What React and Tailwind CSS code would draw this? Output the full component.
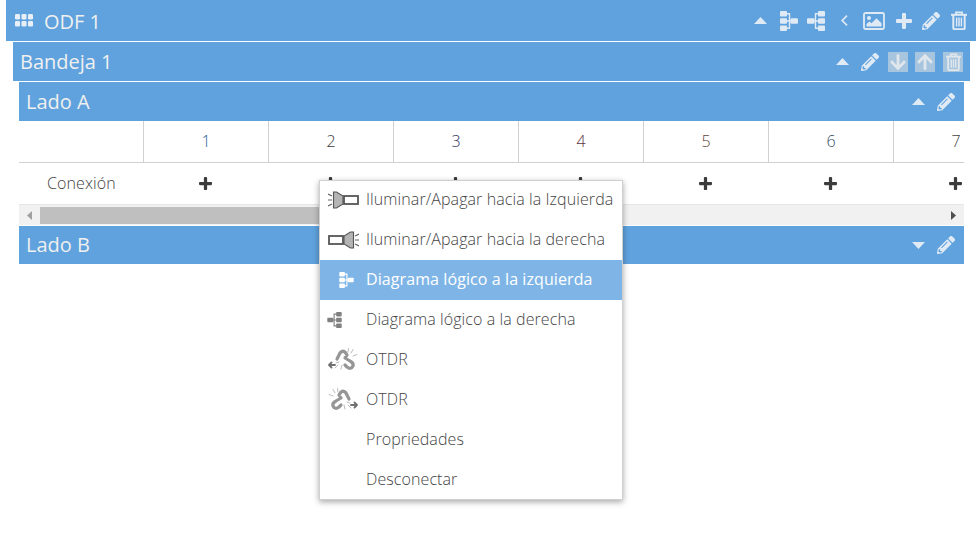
import React from 'react';
import { FaPencilAlt, FaArrowDown, FaArrowUp } from 'react-icons/fa';

const ports = [1, 2, 3, 4, 5, 6, 7];
const numColors = ['#1f5f96', '#3a3a3a', '#34345e', '#5e3444', '#5e4434', '#345064', '#444'];

function GridIcon() {
  return (
    <svg width="18" height="13" viewBox="0 0 18 13" fill="#e8eff6" className="mr-[11px]">
      {[0, 6.5, 13].map((x) =>
        [0, 7].map((y) => <rect key={`${x}-${y}`} x={x} y={y} width="5" height="5.5" rx="1.2" />)
      )}
    </svg>
  );
}

// three boxes on the left, one on the right
function TreeLeft({ w = 18, h = 20, className }) {
  return (
    <svg width={w} height={h} viewBox="0 0 18 20" fill="currentColor" className={className}>
      <rect x="0" y="0" width="7" height="5.5" rx="1" />
      <rect x="0" y="7.2" width="7" height="5.6" rx="1" />
      <rect x="0" y="14.5" width="7" height="5.5" rx="1" />
      <rect x="10.5" y="7.2" width="7.5" height="5.6" rx="1" />
      <path d="M7 2.7h2.5v14.6H7M7 10h4" fill="none" stroke="currentColor" strokeWidth="1.4" />
    </svg>
  );
}

function TreeRight({ w = 18, h = 20, className }) {
  return <TreeLeft w={w} h={h} className={`-scale-x-100 ${className}`} />;
}

function Caret({ down }) {
  return (
    <svg width="13" height="7" viewBox="0 0 13 7" fill="currentColor">
      <path d={down ? 'M0 0h13L6.5 7z' : 'M6.5 0L13 7H0z'} />
    </svg>
  );
}

function ScrollArrow({ right, color }) {
  return (
    <svg width="5" height="9" viewBox="0 0 5 9" fill={color}>
      <path d={right ? 'M0 0l5 4.5L0 9z' : 'M5 0L0 4.5 5 9z'} />
    </svg>
  );
}

function Angle({ className }) {
  return (
    <svg width="7" height="11" viewBox="0 0 7 11" fill="none" stroke="currentColor" strokeWidth="1.7" className={className}>
      <path d="M6 .7L1.2 5.5 6 10.3" />
    </svg>
  );
}

function PictureIcon({ className }) {
  return (
    <svg width="22" height="18" viewBox="0 0 22 18" className={className}>
      <rect x="1" y="1" width="20" height="16" rx="1.5" fill="none" stroke="currentColor" strokeWidth="1.8" />
      <circle cx="6" cy="6" r="2" fill="currentColor" />
      <path d="M3.5 14.5V12l3-2.500 2 1.800 5-5 5 5v3.200z" fill="currentColor" />
    </svg>
  );
}

function PlusIcon({ size, className }) {
  return (
    <svg width={size} height={size} viewBox="0 0 16 16" fill="currentColor" className={className}>
      <path d="M6 1.2C6 .5 6.5 0 7 0h2c.5 0 1 .5 1 1.2V6h4.800c.7 0 1.200.5 1.200 1v2c0 .5-.5 1-1.200 1H10v4.800c0 .7-.5 1.200-1 1.200H7c-.5 0-1-.5-1-1.200V10H1.200C.5 10 0 9.500 0 9V7c0-.5.5-1 1.200-1H6z" />
    </svg>
  );
}

function TrashIcon({ w = 16, h = 19, className }) {
  return (
    <svg width={w} height={h} viewBox="0 0 16 19" className={className} fill="none" stroke="currentColor">
      <path d="M0 3.8h16" strokeWidth="2" />
      <path d="M5 3.5V1.300h6v2.200" strokeWidth="1.800" />
      <path d="M2.3 4v13c0 .7.5 1.200 1.200 1.200h9c.7 0 1.200-.5 1.200-1.200V4" strokeWidth="2" />
      <path d="M5.6 6.500v9M8 6.500v9M10.400 6.500v9" strokeWidth="1.500" />
    </svg>
  );
}

function Torch({ flip }) {
  return (
    <svg width="31" height="18" viewBox="0 0 31 18" className={flip ? '-scale-x-100' : ''} fill="none">
      <path d="M0 3l4 2M0 9h4M0 15l4-2" stroke="#666" strokeWidth="1.2" />
      <path d="M5.5 1h3L15 5v8l-6.500 4h-3z" fill="#b4b4b4" stroke="#555" strokeWidth="1.1" />
      <rect x="16" y="5" width="14" height="8" fill="#fff" stroke="#555" strokeWidth="1.8" />
    </svg>
  );
}

function BrokenLink({ flip }) {
  return (
    <svg width="30" height="24" viewBox="0 0 30 24" className={flip ? '-scale-x-100' : ''} fill="none" strokeLinecap="round" strokeLinejoin="round">
      <path d="M9 11l3-6q2-3 5-1l2 3-2 3 5 3q4 2 3 5-2 4-6 1l-2-2" stroke="#969696" strokeWidth="3.2" />
      <path d="M23 5l2-3.500M25 8l4-1.500M20 4l.5-3.500M11 14l-3 1M14 17l-1 4M10 17l-3 3" stroke="#bbb" strokeWidth="1" />
      <path d="M1 17h6M1 17l2.500-2.500M1 17l2.500 2.500" stroke="#707070" strokeWidth="1.8" />
    </svg>
  );
}

function Header({ title, className, children, left, textClass = '' }) {
  return (
    <div className={`flex items-center bg-[#5fa2dd] text-[20px] text-[#f0f0f0] ${className}`}>
      {left}
      <span className={`leading-none ${textClass}`}>{title}</span>
      <div className="ml-auto flex items-center text-[#dfeaf5]">{children}</div>
    </div>
  );
}

function MenuItem({ icon, label, active }) {
  return (
    <div className={`flex h-10 items-center ${active ? 'bg-[#7fb5e6] font-medium text-white' : 'font-light text-[#444]'}`}>
      <div className="flex w-[46px] shrink-0 items-center justify-center">{icon}</div>
      <span className="pb-0.5 text-[16px] tracking-[0.09px] whitespace-nowrap">{label}</span>
    </div>
  );
}

function Disabled({ children, className }) {
  return <div className={`flex h-5 w-5 items-center justify-center bg-[#a7c5df] text-[#dfe6ec] ${className}`}>{children}</div>;
}

export default function App() {
  return (
    <div className="relative h-[537px] w-[976px] overflow-hidden bg-white font-['Open_Sans',sans-serif]">
      <div className="ml-[6px] flex flex-col">
        <Header title="ODF 1" textClass="pt-0.5" className="h-[41px] pl-[9px] pr-[9px]" left={<GridIcon />}>
          <Caret />
          <TreeLeft className="ml-[13px]" />
          <TreeRight className="ml-[9px]" />
          <Angle className="ml-[16px]" />
          <PictureIcon className="ml-[15px]" />
          <PlusIcon size={16} className="ml-[11px]" />
          <FaPencilAlt className="ml-[10px] h-[18px] w-[18px]" />
          <TrashIcon className="ml-[11px]" />
        </Header>

        <div className="mt-px ml-[7px] mr-[6px] flex flex-col">
          <Header title="Bandeja 1" className="h-[39px] pl-[7px] pr-[7px]">
            <Caret />
            <FaPencilAlt className="ml-[12px] h-[18px] w-[18px]" />
            <Disabled className="ml-[9px]"><FaArrowDown className="h-[18px] w-[18px]" /></Disabled>
            <Disabled className="ml-[7px]"><FaArrowUp className="h-[18px] w-[18px]" /></Disabled>
            <Disabled className="ml-2"><TrashIcon w={15} h={18} /></Disabled>
          </Header>

          <div className="mt-px ml-[6px] mr-[6px] flex flex-col">
            <Header title="Lado A" className="h-[39px] pl-[7px] pr-[9px]">
              <Caret />
              <FaPencilAlt className="ml-[12px] h-[18px] w-[18px]" />
            </Header>

            <div className="overflow-hidden">
              <div className="flex h-[42px] w-max border-b border-[#d0d0d0]">
                <div className="w-[124px]" />
                {ports.map((n, i) => (
                  <div
                    key={n}
                    className="flex w-[125px] items-center justify-center border-l border-[#d0d0d0] pb-0.5 text-[16px] font-light"
                    style={{ color: numColors[i] }}
                  >
                    {n}
                  </div>
                ))}
              </div>
              <div className="flex h-[41px] w-max items-center text-[#444]">
                <div className="w-[124px] pb-0.5 pl-7 text-[16px] font-light tracking-[0.09px]">Conexión</div>
                {ports.map((n) => (
                  <div key={n} className="flex w-[125px] items-center justify-center">
                    <PlusIcon size={13} className="text-[#3c3c3c]" />
                  </div>
                ))}
              </div>
            </div>

            <div className="flex h-[21px] items-center border-t border-[#e6e6e6] bg-[#f1f1f1] pt-px">
              <div className="flex w-[21px] justify-center">
                <ScrollArrow color="#a0a0a0" />
              </div>
              <div className="h-[17px] w-[400px] bg-[#bfbfbf]" />
              <div className="ml-auto flex w-[21px] justify-center">
                <ScrollArrow right color="#505050" />
              </div>
            </div>

            <Header title="Lado B" className="mt-px h-[38px] pl-[7px] pr-[9px]">
              <Caret down />
              <FaPencilAlt className="ml-[12px] h-[18px] w-[18px]" />
            </Header>
          </div>
        </div>
      </div>

      <div className="absolute left-[319px] top-[180px] h-[320px] w-[304px] border border-[#d0d0d0] bg-white shadow-[0_2px_6px_rgba(0,0,0,0.35)]">
        <div className="-mt-px">
          <MenuItem icon={<Torch />} label="Iluminar/Apagar hacia la Izquierda" />
          <MenuItem icon={<Torch flip />} label="Iluminar/Apagar hacia la derecha" />
          <MenuItem active icon={<TreeLeft w={15} h={16} className="ml-[7px] text-white" />} label="Diagrama lógico a la izquierda" />
          <MenuItem icon={<TreeRight w={15} h={16} className="mr-[18px] text-[#808080]" />} label="Diagrama lógico a la derecha" />
          <MenuItem icon={<BrokenLink />} label="OTDR" />
          <MenuItem icon={<BrokenLink flip />} label="OTDR" />
          <MenuItem label="Propriedades" />
          <MenuItem label="Desconectar" />
        </div>
      </div>
    </div>
  );
}
